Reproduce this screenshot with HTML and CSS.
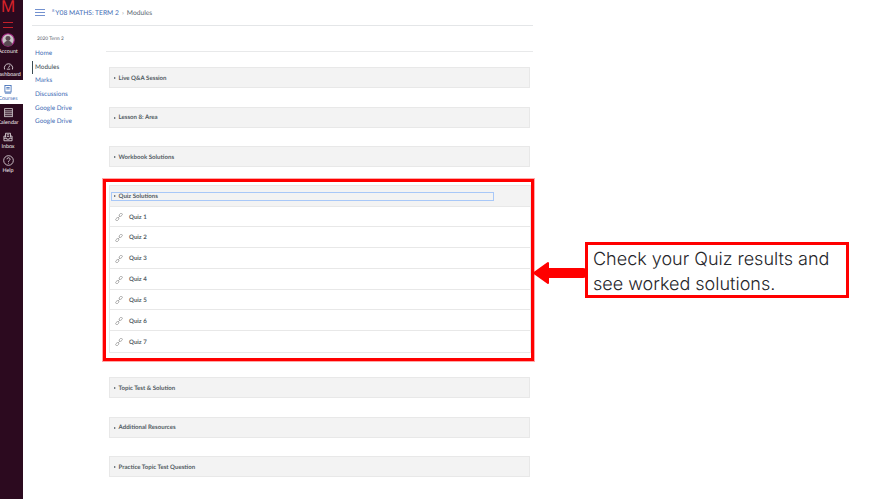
FILE: index.html
```html
<!DOCTYPE html>
<html lang="en">
<head>
    <meta charset="UTF-8">
    <meta name="viewport" content="width=device-width, initial-scale=1.0">
    <title>Modules</title>
    <link rel="stylesheet" href="styles.css">
</head>
<body>

    <nav class="global-nav">
        <div class="logo">
            <span class="logo-m">M</span>
            <span class="logo-bar"></span>
            <span class="logo-bar"></span>
        </div>
        <a class="nav-item nav-account">
            <svg viewBox="0 0 18 18" width="14" height="14">
                <circle cx="9" cy="9" r="8" fill="#c9c3c6" stroke="#a0217f" stroke-width="1.4"/>
                <circle cx="9" cy="7" r="3.2" fill="#5a4a52"/>
                <path d="M3.5 15c.6-3.6 3-5 5.500-5s4.900 1.400 5.500 5a8 8 0 0 1-11 0z" fill="#5a4a52"/>
            </svg>
            <span>Account</span>
        </a>
        <a class="nav-item nav-dash">
            <svg viewBox="0 0 18 14" width="11" height="8" fill="none" stroke="#e6e0e3" stroke-width="1.500">
                <path d="M3 12.500H2a7.300 7.300 0 1 1 14 0h-1"/>
                <path d="M6 12.500h6"/>
                <path d="M9 10l2.500-4"/>
            </svg>
            <span>Dashboard</span>
        </a>
        <a class="nav-item nav-courses">
            <svg viewBox="0 0 14 16" width="8" height="9" fill="none" stroke="#3f6cb5" stroke-width="1.500">
                <rect x="1.500" y="1" width="11" height="11.500"/>
                <path d="M4 4.500h6M4 7h6"/>
                <path d="M1.500 14.500h11"/>
            </svg>
            <span>Courses</span>
        </a>
        <a class="nav-item nav-calendar">
            <svg viewBox="0 0 14 15" width="9" height="11" fill="none" stroke="#d6d0d3" stroke-width="1.300">
                <rect x="1" y="1.500" width="12" height="12.500"/>
                <path d="M1 5h12M1 8h12M1 11h12"/>
            </svg>
            <span>Calendar</span>
        </a>
        <a class="nav-item nav-inbox">
            <svg viewBox="0 0 16 15" width="10" height="10" fill="none" stroke="#e6e0e3" stroke-width="1.300">
                <path d="M4 8V1.500h8V8"/>
                <path d="M6 4h4M6 6.500h4"/>
                <path d="M4 6H1.500v7.500h13V6H12"/>
                <path d="M1.500 9.500h4.500v1.500h4V9.500h4.500"/>
            </svg>
            <span>Inbox</span>
        </a>
        <a class="nav-item nav-help">
            <svg viewBox="0 0 16 16" width="11" height="11" fill="none" stroke="#e6e0e3" stroke-width="1.200">
                <circle cx="8" cy="8" r="7"/>
                <path d="M5.800 6.200a2.200 2.200 0 1 1 3.300 1.900C8.300 8.600 8 9 8 10"/>
                <path d="M8 11.300v1.200"/>
            </svg>
            <span>Help</span>
        </a>
    </nav>

    <div class="page">
        <header class="topbar">
            <svg class="burger" viewBox="0 0 10 7" width="10" height="7">
                <path d="M0 .5h10M0 3.500h10M0 6.500h10" stroke="#7391cf" stroke-width="1"/>
            </svg>
            <div class="crumbs">
                <sup class="crumb-mark">8</sup><a class="crumb-link">Y08 MATHS: TERM 2</a>
                <span class="crumb-sep">&rsaquo;</span>
                <span class="crumb-here">Modules</span>
            </div>
        </header>

        <div class="main">
            <aside class="course-nav">
                <div class="term">2020 Term 2</div>
                <a class="course-link">Home</a>
                <a class="course-link current">Modules</a>
                <a class="course-link">Marks</a>
                <a class="course-link">Discussions</a>
                <a class="course-link">Google Drive</a>
                <a class="course-link">Google Drive</a>
            </aside>

            <section class="content">
                <div class="content-rule"></div>

                <div class="module"><div class="module-head"><span class="caret"></span>Live Q&amp;A Session</div></div>
                <div class="module"><div class="module-head"><span class="caret"></span>Lesson 8: Area</div></div>
                <div class="module"><div class="module-head"><span class="caret"></span>Workbook Solutions</div></div>

                <div class="highlight">
                    <div class="module open">
                        <div class="module-head">
                            <div class="focus-box"><span class="caret"></span>Quiz Solutions</div>
                        </div>
                        <div class="quiz-row"><svg class="link-icon" viewBox="0 0 16 16" width="8" height="8"><use href="#chain"/></svg>Quiz 1</div>
                        <div class="quiz-row"><svg class="link-icon" viewBox="0 0 16 16" width="8" height="8"><use href="#chain"/></svg>Quiz 2</div>
                        <div class="quiz-row"><svg class="link-icon" viewBox="0 0 16 16" width="8" height="8"><use href="#chain"/></svg>Quiz 3</div>
                        <div class="quiz-row"><svg class="link-icon" viewBox="0 0 16 16" width="8" height="8"><use href="#chain"/></svg>Quiz 4</div>
                        <div class="quiz-row"><svg class="link-icon" viewBox="0 0 16 16" width="8" height="8"><use href="#chain"/></svg>Quiz 5</div>
                        <div class="quiz-row"><svg class="link-icon" viewBox="0 0 16 16" width="8" height="8"><use href="#chain"/></svg>Quiz 6</div>
                        <div class="quiz-row"><svg class="link-icon" viewBox="0 0 16 16" width="8" height="8"><use href="#chain"/></svg>Quiz 7</div>
                    </div>
                </div>

                <div class="module"><div class="module-head"><span class="caret"></span>Topic Test &amp; Solution</div></div>
                <div class="module"><div class="module-head"><span class="caret"></span>Additional Resources</div></div>
                <div class="module"><div class="module-head"><span class="caret"></span>Practice Topic Test Question</div></div>
            </section>
        </div>
    </div>

    <svg class="arrow" viewBox="0 0 54 26" width="54" height="26">
        <path d="M2 13L16 3v6h35a4 4 0 0 1 0 8H16v6z" fill="#f00" stroke="#f00" stroke-width="2" stroke-linejoin="round"/>
    </svg>
    <div class="callout">Check your Quiz results and see worked solutions.</div>

    <svg width="0" height="0" class="defs">
        <symbol id="chain" viewBox="0 0 16 16">
            <g fill="none" stroke="#a3a3a3" stroke-width="1.800">
                <rect x="8" y="1.300" width="7" height="4.600" rx="2.300" transform="rotate(-45 11.500 3.600)"/>
                <rect x="1" y="10" width="7" height="4.600" rx="2.300" transform="rotate(-45 4.500 12.300)"/>
                <path d="M6 10l4-4"/>
            </g>
        </symbol>
    </svg>

</body>
</html>
```

FILE: styles.css
```css
* {
    margin: 0;
    padding: 0;
    box-sizing: border-box;
}
html, body {
    height: 100%;
}
body {
    display: flex;
    overflow: hidden;
    position: relative;
    background: #fff;
    font-family: Lato, "Liberation Sans", sans-serif;
    color: #3b4a52;
    text-rendering: geometricPrecision;
}
a {
    text-decoration: none;
}

/* left global nav */
.global-nav {
    width: 23px;
    flex-shrink: 0;
    background: #2c0a1f;
    overflow: hidden;
    display: flex;
    flex-direction: column;
}
.logo {
    height: 32px;
    width: 16px;
    display: flex;
    flex-direction: column;
    align-items: center;
}
.logo-m {
    font-family: "Liberation Sans", sans-serif;
    font-size: 17px;
    line-height: 14px;
    color: #d8232a;
    margin-bottom: 8px;
}
.logo-bar {
    width: 10px;
    height: 1px;
    flex-shrink: 0;
    background: #c3202a;
    margin-bottom: 4px;
}
.nav-item {
    height: 24px;
    width: 23px;
    padding-right: 7px;
    display: flex;
    flex-direction: column;
    align-items: center;
    font-size: 5.400px;
    line-height: 9px;
    color: #efe9ec;
    white-space: nowrap;
}
.nav-item svg {
    flex-shrink: 0;
    margin-bottom: 1px;
}
.nav-account {
    padding-top: 1px;
}
.nav-dash {
    padding-top: 6px;
}
.nav-courses {
    padding-top: 5px;
    background: #fff;
    color: #3f6cb5;
}
.nav-calendar {
    padding-top: 3px;
}
.nav-inbox {
    padding-top: 4px;
}
.nav-help {
    padding-top: 3px;
}

/* page */
.page {
    flex: 1;
    min-width: 0;
    padding: 0 337px 0 9px;
}
.topbar {
    height: 26px;
    display: flex;
    align-items: center;
    border-bottom: 1px solid #e4e6e8;
}
.burger {
    flex-shrink: 0;
    margin-left: 3px;
    margin-right: 7px;
}
.crumbs {
    font-size: 6.700px;
    white-space: nowrap;
    color: #5a6670;
    display: flex;
    align-items: baseline;
    gap: 3px;
}
.crumb-mark {
    font-size: 4px;
    line-height: 4px;
    color: #5b7cc0;
    margin-right: -2px;
    align-self: flex-start;
}
.crumb-link {
    color: #3f6cb5;
}
.crumb-sep {
    color: #8b959c;
}

.main {
    display: flex;
}
.course-nav {
    width: 74px;
    flex-shrink: 0;
    padding-top: 11px;
    display: flex;
    flex-direction: column;
    font-size: 6.400px;
}
.term {
    font-size: 4.800px;
    color: #59636a;
    padding-left: 5px;
    height: 10px;
    line-height: 5px;
}
.course-link {
    height: 13.700px;
    line-height: 13.700px;
    padding-left: 3px;
    color: #3f6cb5;
    white-space: nowrap;
}
.course-link.current {
    color: #3b4a52;
    border-left: 1px solid #3b4a52;
    padding-left: 2px;
}

.content {
    flex: 1;
    min-width: 0;
}
.content-rule {
    height: 1px;
    background: #e8e9ea;
    margin-top: 25px;
    margin-bottom: 15px;
}
.module {
    margin: 0 3px 18.500px 2.500px;
    background: #f3f3f3;
    border: 1px solid #e8e8e8;
}
.module-head {
    height: 19px;
    display: flex;
    align-items: center;
    padding: 1px 0 0 4px;
    font-size: 6.100px;
    font-weight: 700;
    color: #525c63;
    white-space: nowrap;
}
.caret {
    width: 0;
    height: 0;
    border-left: 2.500px solid #4b575f;
    border-top: 1.500px solid transparent;
    border-bottom: 1.500px solid transparent;
    margin-right: 3px;
}

/* the red box round the open module */
.highlight {
    border: 3px solid #f00;
    box-shadow: 0 0 0 1px #ffa8a8;
    margin: -6.500px -1px 16px -3px;
    padding: 3px 0 5px 3px;
    background: #fff;
}
.highlight .module {
    margin: 0;
    background: #fff;
}
.highlight .module-head {
    height: 20.500px;
    background: #f3f3f3;
    padding: 1px 0 0 1px;
    border-bottom: 1px solid #e8e8e8;
}
.focus-box {
    width: 383px;
    height: 9px;
    display: flex;
    align-items: center;
    padding-left: 2px;
    border: 1px solid #a8c8f8;
    background: #f3f3f3;
}
.focus-box .caret {
    margin-right: 2.500px;
}
.quiz-row {
    height: 20.800px;
    display: flex;
    align-items: center;
    padding: 1.500px 0 0 5px;
    font-size: 6.100px;
    font-weight: 700;
    color: #525c63;
    border-bottom: 1px solid #e8e8e8;
}
.quiz-row:last-child {
    border-bottom: 0;
}
.link-icon {
    flex-shrink: 0;
    margin-right: 6px;
}

/* annotation drawn over the screenshot */
.arrow {
    position: absolute;
    left: 532px;
    top: 260px;
}
.callout {
    position: absolute;
    left: 585px;
    top: 242px;
    width: 264px;
    height: 56px;
    border: 3px solid #f00;
    padding: 2px 5px;
    font-family: Inter, "Liberation Sans", sans-serif;
    font-size: 18px;
    font-weight: 300;
    line-height: 25px;
    color: #26262a;
    background: #fff;
}
.defs {
    position: absolute;
}
```
